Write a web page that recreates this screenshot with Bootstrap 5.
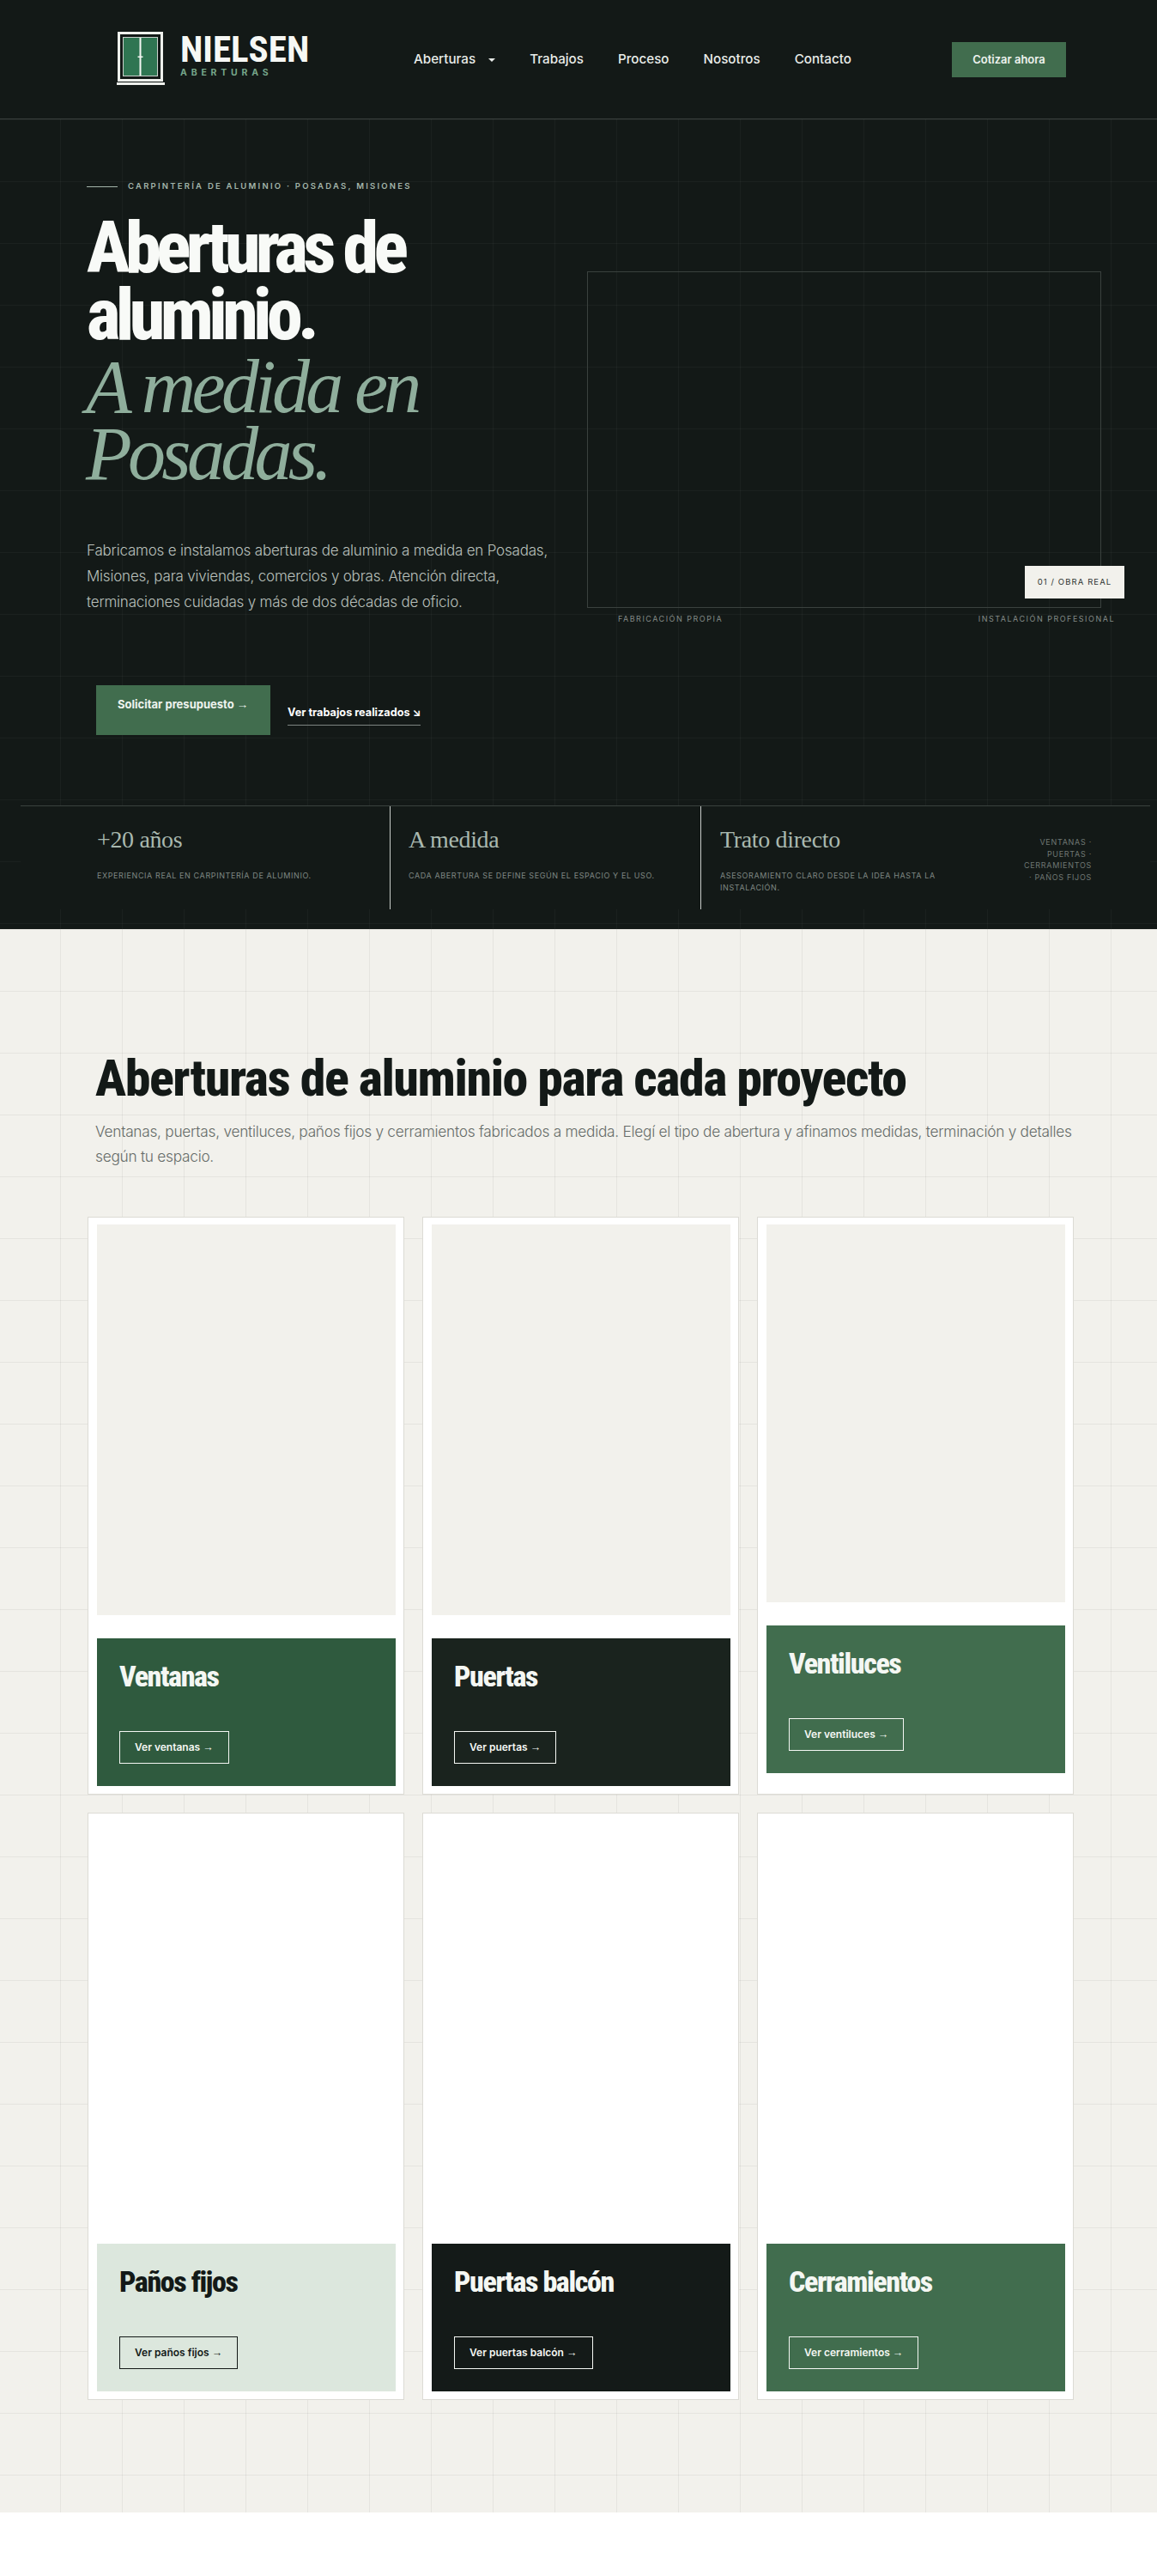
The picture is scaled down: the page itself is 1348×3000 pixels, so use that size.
<!DOCTYPE html>
<html lang="es">
<head>
    <meta charset="UTF-8">
    <title>Nielsen Aberturas</title>
    <link href="https://cdn.jsdelivr.net/npm/bootstrap@5.3.0/dist/css/bootstrap.min.css" rel="stylesheet">
    <style>
        body { font-family: "Inter", "Liberation Sans", sans-serif; background: #fff; color: #131917; }
        .cond { font-family: "Roboto Condensed", "Roboto", sans-serif; font-stretch: 75%; font-weight: 800; }
        .serif { font-family: "Liberation Serif", serif; font-weight: 400; }
        .arrow { font-family: "Liberation Sans", sans-serif; font-weight: 400; font-size: 1.05em; }

        .top-bar { background: #131917; height: 139px; border-bottom: 1px solid #3a413e; padding: 0 106px 0 136px; }
        .brand-box { width: 346px; gap: 18px; }
        .brand-text { padding-bottom: 5px; }
        .brand-name { font-size: 43px; line-height: 33px; font-weight: 700; color: #f6f8f5; }
        .brand-sub { font-size: 10.5px; line-height: 14px; font-weight: 700; letter-spacing: 4.8px; color: #76a68a; margin-top: 4px; }
        .top-links { gap: 40px; }
        .top-links .nav-link { color: #e9ece9; font-size: 15.2px; font-weight: 500; padding: 0; }
        .top-links .dropdown-toggle::after { margin-left: 15px; vertical-align: 2px; }
        .btn-green { background: #416d4e; color: #eef3ee; border: 0; border-radius: 0; font-weight: 700; font-size: 12.5px; }
        .btn-quote { width: 133px; height: 41px; line-height: 41px; padding: 0; text-align: center; font-size: 13px; font-weight: 600; }

        .hero { background-color: #131917; height: 943px; padding-top: 71px;
            background-image: linear-gradient(to right, rgba(255,255,255,.035) 1px, transparent 1px), linear-gradient(to bottom, rgba(255,255,255,.035) 1px, transparent 1px);
            background-size: 72px 72px; background-position: 70px 0; }
        .hero-left { width: 684px; padding-left: 101px; flex-shrink: 0; }
        .eyebrow { gap: 12px; color: #a3b5aa; font-size: 9.5px; font-weight: 600; letter-spacing: 2.24px; height: 14px; }
        .eyebrow i { display: block; width: 36px; height: 1px; background: #a3b5aa; }
        .hero-title { font-size: 84px; line-height: 78px; letter-spacing: -5.6px; color: #f8faf7; margin: 26px 0 0; }
        .hero-title em { font-family: "Liberation Serif", serif; font-stretch: normal; font-weight: 400; color: #8fae9c; font-size: 88px; letter-spacing: -4.7px; display: block; margin: 6px 0 0 -1px; }
        .hero-text { font-size: 17px; font-weight: 300; line-height: 30px; color: #b9c0bc; margin: 58px 0 0; width: 560px; letter-spacing: -.2px; white-space: nowrap; }
        .hero-actions { margin: 82px 0 0 11px; gap: 20px; }
        .btn-lead { width: 203px; height: 58px; padding: 13px 0 0 25px; text-align: left; font-size: 13px; }
        .link-works { color: #fff; font-size: 12.7px; font-weight: 700; text-decoration: none; border-bottom: 1px solid #7d8481; padding-bottom: 6px; margin-top: 22px; height: 25px; }
        .hero-right { margin-top: 106px; width: 599px; position: relative; }
        .hero-frame { height: 392px; border: 1px solid #3a413e; }
        .frame-tag { position: absolute; right: -27px; top: 343px; width: 116px; height: 38px; line-height: 38px; text-align: center; background: #f2f1ec; color: #2d3330; font-size: 9.5px; letter-spacing: 1.1px; }
        .frame-notes { padding: 6px 0 0 36px; margin-right: -16px; color: #848b87; font-size: 9px; letter-spacing: 1.5px; }

        .stats { margin: 82px 8px 0 24px; height: 121px; background: #131917; border-top: 1px solid #3a413e; }
        .stat-cell { padding: 22px 0 0 22px; }
        .stat-cell + .stat-cell { border-left: 1px solid #c8ccc9; }
        .stat-cell h3 { font-size: 28px; line-height: 34px; letter-spacing: -.35px; color: #a9b8af; margin: 0 0 18px; }
        .stat-cell p { font-size: 9px; line-height: 13.5px; letter-spacing: .6px; color: #7f8783; margin: 0; }
        .stat-first { width: 430px; padding-left: 89px; }
        .stat-second { width: 362px; padding-left: 21px; }
        .stat-third { width: 320px; }
        .stat-list { font-size: 9px; line-height: 13.5px; letter-spacing: .7px; color: #6f7773; text-align: right; margin: 35px 0 0 auto; padding-right: 68px; }

        .products { background-color: #f2f1ec; height: 1844px; padding-top: 139px;
            background-image: linear-gradient(to right, rgba(0,0,0,.055) 1px, transparent 1px), linear-gradient(to bottom, rgba(0,0,0,.055) 1px, transparent 1px);
            background-size: 72px 72px; background-position: 70px 0; }
        .products-head { padding-left: 111px; width: 1260px; }
        .products-head h2 { font-size: 60px; line-height: 70px; color: #131917; letter-spacing: -1.45px; margin: 0; }
        .products-head p { font-size: 17.3px; font-weight: 300; line-height: 29px; color: #666c69; margin: 12px 0 0; letter-spacing: -.27px; }
        .products-grid { width: 1170px; margin: 35px 0 0 91.5px; --bs-gutter-x: 21px; --bs-gutter-y: 21px; }
        .prod-card { background: #fff; border: 1px solid #dcdbd5; padding: 8px 9px 9px 10px; height: 100%; }
        .prod-img { height: 455px; background: #f2f1ec; margin-bottom: 27px; }
        .prod-img.short { height: 440px; }
        .prod-img.blank { height: 466px; background: #fff; }
        .prod-panel { height: 172px; padding: 24px 26px 0; }
        .prod-panel h3 { font-size: 34px; line-height: 40px; letter-spacing: -1.4px; margin: 0 0 44px; color: inherit; }
        .btn-see { display: inline-block; height: 38px; line-height: 36px; padding: 0 17px; border: 1px solid currentColor; color: inherit; font-size: 12px; font-weight: 600; text-decoration: none; }
        .tone-a { background: #2f5a3e; color: #f4f7f3; }
        .tone-b { background: #1a231e; color: #f4f7f3; }
        .tone-c { background: #416d4e; color: #f4f7f3; }
        .tone-d { background: #dce7dd; color: #131917; }
        .tone-e { background: #141a18; color: #f4f7f3; }
    </style>
</head>
<body>
    <nav class="top-bar d-flex align-items-center">
        <a class="brand-box d-flex align-items-center text-decoration-none" href="#">
            <svg width="56" height="64" viewBox="0 0 56 64">
                <rect x="2.5" y="1.5" width="50" height="55" fill="#131917" stroke="#eef0ec" stroke-width="3"/>
                <rect x="7.5" y="6.5" width="40" height="45" fill="#2f7552" stroke="#c9cfca" stroke-width="1"/>
                <rect x="26.5" y="7" width="2" height="44" fill="#f4f6f2"/>
                <rect x="24.5" y="28.5" width="6" height="1.5" fill="#f4f6f2"/>
                <rect x="0" y="59" width="56" height="3" fill="#eef0ec"/>
            </svg>
            <span class="brand-text d-block">
                <span class="cond brand-name d-block">NIELSEN</span>
                <span class="brand-sub d-block">ABERTURAS</span>
            </span>
        </a>
        <ul class="nav top-links">
            <li class="nav-item"><a class="nav-link dropdown-toggle" href="#">Aberturas</a></li>
            <li class="nav-item"><a class="nav-link" href="#">Trabajos</a></li>
            <li class="nav-item"><a class="nav-link" href="#">Proceso</a></li>
            <li class="nav-item"><a class="nav-link" href="#">Nosotros</a></li>
            <li class="nav-item"><a class="nav-link" href="#">Contacto</a></li>
        </ul>
        <a class="btn btn-green btn-quote ms-auto" href="#">Cotizar ahora</a>
    </nav>

    <header class="hero">
        <div class="d-flex">
            <div class="hero-left">
                <div class="eyebrow d-flex align-items-center"><i></i><span>CARPINTERÍA DE ALUMINIO · POSADAS, MISIONES</span></div>
                <h1 class="hero-title cond">Aberturas de<br>aluminio.<em>A medida en<br>Posadas.</em></h1>
                <p class="hero-text">Fabricamos e instalamos aberturas de aluminio a medida en Posadas,<br>Misiones, para viviendas, comercios y obras. Atención directa,<br>terminaciones cuidadas y más de dos décadas de oficio.</p>
                <div class="hero-actions d-flex">
                    <a class="btn btn-green btn-lead" href="#">Solicitar presupuesto <span class="arrow">→</span></a>
                    <a class="link-works" href="#">Ver trabajos realizados ↘</a>
                </div>
            </div>
            <div class="hero-right">
                <div class="hero-frame"></div>
                <div class="frame-tag">01 / OBRA REAL</div>
                <div class="frame-notes d-flex justify-content-between">
                    <span>FABRICACIÓN PROPIA</span>
                    <span>INSTALACIÓN PROFESIONAL</span>
                </div>
            </div>
        </div>
        <div class="stats d-flex">
            <div class="stat-cell stat-first">
                <h3 class="serif">+20 años</h3>
                <p>EXPERIENCIA REAL EN CARPINTERÍA DE ALUMINIO.</p>
            </div>
            <div class="stat-cell stat-second">
                <h3 class="serif">A medida</h3>
                <p>CADA ABERTURA SE DEFINE SEGÚN EL ESPACIO Y EL USO.</p>
            </div>
            <div class="stat-cell stat-third">
                <h3 class="serif">Trato directo</h3>
                <p>ASESORAMIENTO CLARO DESDE LA IDEA HASTA LA INSTALACIÓN.</p>
            </div>
            <div class="stat-list">VENTANAS ·<br>PUERTAS ·<br>CERRAMIENTOS<br>· PAÑOS FIJOS</div>
        </div>
    </header>

    <section class="products">
        <div class="products-head">
            <h2 class="cond">Aberturas de aluminio para cada proyecto</h2>
            <p>Ventanas, puertas, ventiluces, paños fijos y cerramientos fabricados a medida. Elegí el tipo de abertura y afinamos medidas, terminación y detalles según tu espacio.</p>
        </div>
        <div class="products-grid row">
            <div class="col-4"><div class="prod-card">
                <div class="prod-img"></div>
                <div class="prod-panel tone-a"><h3 class="cond">Ventanas</h3><a class="btn-see" href="#">Ver ventanas <span class="arrow">→</span></a></div>
            </div></div>
            <div class="col-4"><div class="prod-card">
                <div class="prod-img"></div>
                <div class="prod-panel tone-b"><h3 class="cond">Puertas</h3><a class="btn-see" href="#">Ver puertas <span class="arrow">→</span></a></div>
            </div></div>
            <div class="col-4"><div class="prod-card">
                <div class="prod-img short"></div>
                <div class="prod-panel tone-c"><h3 class="cond">Ventiluces</h3><a class="btn-see" href="#">Ver ventiluces <span class="arrow">→</span></a></div>
            </div></div>
            <div class="col-4"><div class="prod-card">
                <div class="prod-img blank"></div>
                <div class="prod-panel tone-d"><h3 class="cond">Paños fijos</h3><a class="btn-see" href="#">Ver paños fijos <span class="arrow">→</span></a></div>
            </div></div>
            <div class="col-4"><div class="prod-card">
                <div class="prod-img blank"></div>
                <div class="prod-panel tone-e"><h3 class="cond">Puertas balcón</h3><a class="btn-see" href="#">Ver puertas balcón <span class="arrow">→</span></a></div>
            </div></div>
            <div class="col-4"><div class="prod-card">
                <div class="prod-img blank"></div>
                <div class="prod-panel tone-c"><h3 class="cond">Cerramientos</h3><a class="btn-see" href="#">Ver cerramientos <span class="arrow">→</span></a></div>
            </div></div>
        </div>
    </section>

    <script src="https://cdn.jsdelivr.net/npm/bootstrap@5.3.0/dist/js/bootstrap.bundle.min.js"></script>
</body>
</html>
